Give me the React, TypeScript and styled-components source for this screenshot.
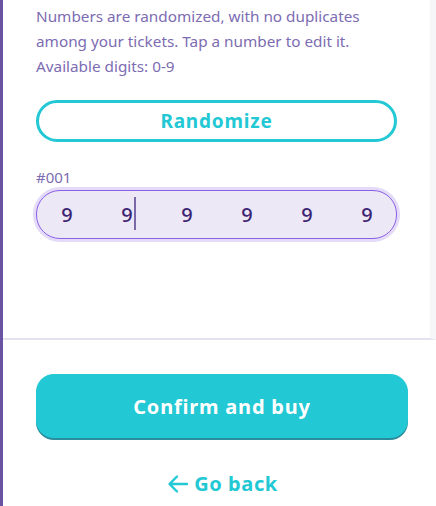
import React from "react";
import styled, { createGlobalStyle } from "styled-components";

const digits = ["9", "9", "9", "9", "9", "9"];

const App = () => {
  return (
    <Page>
      <GlobalStyle />
      <Scroller>
        <Intro>
          Numbers are randomized, with no duplicates among your tickets. Tap a
          number to edit it. Available digits: 0-9
        </Intro>
        <OutlineButton>Randomize</OutlineButton>
        <TicketLabel>#001</TicketLabel>
        <DigitRow>
          {digits.map((d, i) => (
            <Digit key={i} $active={i === 1}>
              {d}
            </Digit>
          ))}
        </DigitRow>
      </Scroller>
      <Footer>
        <PrimaryButton>Confirm and buy</PrimaryButton>
        <BackLink>
          <svg width="24" height="24" viewBox="0 0 24 24" fill="none">
            <path
              d="M21 12H4M11 4.5L3.5 12l7.5 7.5"
              stroke="currentColor"
              strokeWidth="2.4"
              strokeLinecap="round"
              strokeLinejoin="round"
            />
          </svg>
          Go back
        </BackLink>
      </Footer>
    </Page>
  );
};

export default App;

const GlobalStyle = createGlobalStyle`
  body {
    margin: 0;
    background: #ffffff;
    font-family: "Noto Sans", "Open Sans", sans-serif;
  }
`;

const Page = styled.div`
  display: flex;
  flex-direction: column;
  height: 506px;
  width: 436px;
  box-sizing: border-box;
  border-left: 3px solid #6a53a3;
  overflow: hidden;
`;

const Scroller = styled.div`
  height: 340px;
  box-sizing: border-box;
  padding: 4px 0 0 33px;
  border-right: 6px solid #f6f6f8;
  border-bottom: 2px solid #e4e0ee;
  display: flex;
  flex-direction: column;
`;

const Intro = styled.p`
  margin: 0;
  width: 338px;
  font-size: 15.3px;
  line-height: 25px;
  color: #7c6cb2;
`;

const OutlineButton = styled.button`
  margin-top: 21px;
  width: 361px;
  height: 42px;
  box-sizing: border-box;
  border: 3px solid #22c8d4;
  border-radius: 21px;
  background: #ffffff;
  color: #22c8d4;
  font-family: inherit;
  font-size: 19px;
  font-weight: 700;
  letter-spacing: 0.8px;
  padding: 0;
`;

const TicketLabel = styled.div`
  margin-top: 25px;
  font-size: 15px;
  line-height: 20px;
  color: #7c6cb2;
`;

const DigitRow = styled.div`
  margin-top: 3px;
  width: 361px;
  height: 49px;
  box-sizing: border-box;
  border: 1.5px solid #8b5fe6;
  border-radius: 24px;
  background: #ede8f6;
  box-shadow: 0 0 0 3px #e4dbf8;
  display: grid;
  grid-template-columns: repeat(6, 60px);
  align-items: center;
`;

const Digit = styled.span<{ $active?: boolean }>`
  position: relative;
  text-align: center;
  font-size: 20px;
  font-weight: 500;
  color: #3b2473;
  &::after {
    content: "";
    display: ${(p) => (p.$active ? "block" : "none")};
    position: absolute;
    left: 37px;
    top: -4px;
    width: 1.5px;
    height: 33px;
    background: #7a68a8;
  }
`;

const Footer = styled.div`
  flex: 1;
  display: flex;
  flex-direction: column;
  align-items: center;
  padding: 34px 28px 0 33px;
`;

const PrimaryButton = styled.button`
  width: 372px;
  height: 64px;
  border: none;
  border-radius: 18px;
  background: #22c8d4;
  box-shadow: 0 2px 0 #2a8c9c;
  color: #ffffff;
  font-family: inherit;
  font-size: 20px;
  font-weight: 700;
  letter-spacing: 0.8px;
`;

const BackLink = styled.div`
  margin-top: 32px;
  display: flex;
  align-items: center;
  gap: 4px;
  color: #22c8d4;
  font-size: 20px;
  font-weight: 700;
  letter-spacing: 0.6px;
`;
